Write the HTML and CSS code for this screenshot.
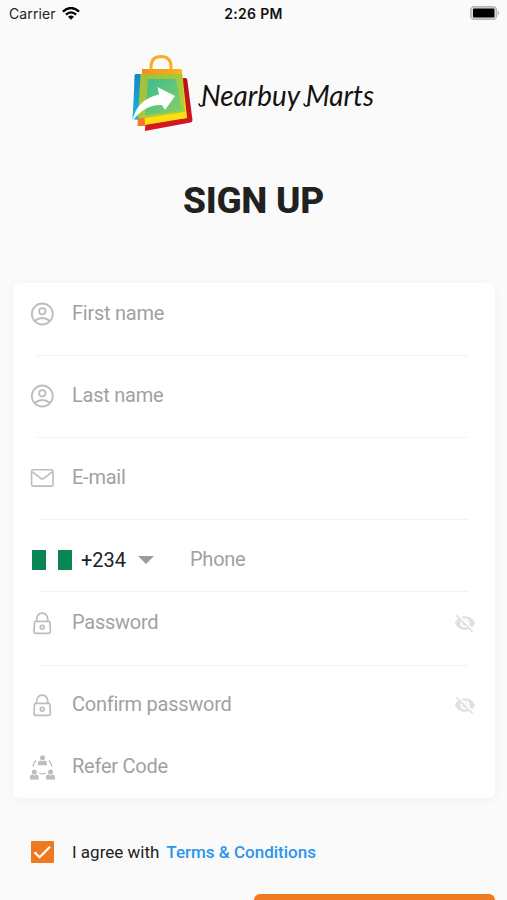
FILE: index.html
```
<!DOCTYPE html>
<html lang="en">
<head>
<meta charset="utf-8">
<title>Nearbuy Marts – Sign up</title>
<link rel="stylesheet" href="styles.css">
</head>
<body>
<svg width="0" height="0" class="defs">
  <symbol id="user" viewBox="0 0 24 24"><g fill="none" stroke="#bdbdbd" stroke-width="1.8"><circle cx="12.300" cy="12" r="10.5"/><circle cx="12.300" cy="9.3" r="3.2"/><path d="M4.500 19Q12.300 13 20.100 19"/></g></symbol>
  <symbol id="mail" viewBox="0 0 24 24"><g fill="none" stroke="#bdbdbd" stroke-width="1.6"><rect x="1.600" y="3.7" width="21.4" height="16.4" rx="1.6"/><path d="M2.400 5.900l8.600 6.600q1.300 1 2.600 0L22.200 5.900"/></g></symbol>
  <symbol id="lock" viewBox="0 0 24 24"><g fill="none" stroke="#bdbdbd" stroke-width="1.7"><path d="M5.600 10.300H18.800Q19.800 10.300 19.900 11.300L20.400 20.700Q20.400 22.300 18.800 22.300H5.600Q4 22.300 4 20.700L4.500 11.300Q4.600 10.300 5.600 10.300Z"/><path d="M6.500 10Q6.500 2.200 12.200 2.200T17.900 10"/><circle cx="12.200" cy="16.300" r="1.900"/></g></symbol>
  <symbol id="eye" viewBox="0 0 24 24"><path fill="#e0e0e0" d="M12 7c2.760 0 5 2.240 5 5 0 .650-.130 1.260-.360 1.830l2.920 2.920c1.510-1.260 2.700-2.890 3.430-4.750-1.730-4.390-6-7.500-11-7.500-1.400 0-2.740.250-3.980.700l2.160 2.160C10.740 7.130 11.350 7 12 7zM2 4.270l2.280 2.280.460.460C3.080 8.300 1.780 10.020 1 12c1.730 4.390 6 7.500 11 7.500 1.550 0 3.030-.300 4.380-.840l.420.420L19.730 22 21 20.730 3.270 3 2 4.270zM7.530 9.800l1.550 1.550c-.050.210-.080.430-.080.650 0 1.660 1.340 3 3 3 .220 0 .440-.030.650-.080l1.550 1.550c-.670.330-1.410.530-2.200.530-2.760 0-5-2.240-5-5 0-.790.200-1.530.530-2.200zm4.310-.780l3.150 3.150.020-.160c0-1.660-1.340-3-3-3l-.170.010z"/></symbol>
  <symbol id="person" viewBox="0 0 9 10.5"><circle cx="4.500" cy="2.700" r="2.500"/><path d="M0 10.500V8Q0 5.600 3 5.400L4.500 6.500 6 5.400Q9 5.600 9 8V10.500Z"/></symbol>
</svg>
<header class="status">
  <div class="carrier"><span>Carrier</span>
    <svg width="18" height="13" viewBox="0 0 18 13"><g fill="none" stroke="#000" stroke-width="2.300"><path d="M.900 4.600Q9-2.600 17.100 4.600"/><path d="M3.900 7.700Q9 3.100 14.100 7.700"/></g><path d="M6 9.800Q9 7.300 12 9.800L9 12.800Z"/></svg>
  </div>
  <div class="time">2:26 PM</div>
  <svg class="battery" width="30" height="14" viewBox="0 0 30 14"><rect x=".8" y=".8" width="25.800" height="12.400" rx="3.500" fill="#ddd" stroke="#b5b5b5" stroke-width="1.500"/><rect x="3" y="2.500" width="21.500" height="9" rx="1" fill="#000"/><path d="M28 4.800q2 2.200 0 4.400z" fill="#aaa"/></svg>
</header>
<main>
  <div class="logo">
    <svg width="280" height="80" viewBox="0 0 280 80">
      <defs>
        <linearGradient id="blue" x2="0" y2="1"><stop stop-color="#1687bd"/><stop offset="1" stop-color="#1bb5e8"/></linearGradient>
        <linearGradient id="gold" x2="1" y2="1"><stop stop-color="#f28a20"/><stop offset=".5" stop-color="#f9b81b"/><stop offset="1" stop-color="#fff100"/></linearGradient>
        <linearGradient id="lime" x2="1" y2="1"><stop stop-color="#a4bd38"/><stop offset="1" stop-color="#a8d63b"/></linearGradient>
        <linearGradient id="teal" x2="1" y2="1"><stop stop-color="#3cbc92"/><stop offset="1" stop-color="#88cf63"/></linearGradient>
        <linearGradient id="red" x2="0" y2="1"><stop stop-color="#b5121b"/><stop offset="1" stop-color="#d71920"/></linearGradient>
      </defs>
      <path fill="url(#blue)" d="M8 20H20V66L4.500 65.500Q6 40 6.500 22Q6.500 20 8 20Z"/>
      <path fill="url(#red)" d="M54 24H57.500Q59 24 59.300 26L64.500 66Q64.500 68 62.500 68.500L17 77 17.600 64 54 60Z"/>
      <path fill="#f37c2b" d="M10 61H20L17 72 9.500 72Z"/>
      <path fill="url(#gold)" d="M14 15H52Q54 15 54 17L59 64 17 69 13.500 40Z"/>
      <path fill="#ffdf12" d="M17 64L58 58 59 64 17 71Z"/>
      <path fill="url(#lime)" d="M12.500 20H54L57 58 16 64 10 64Z"/>
      <path fill="url(#teal)" d="M20 25H48L54 57 17 61Z"/>
      <path d="M23 16V13Q23 2.500 33 2.500T43 13V16" fill="none" stroke="#fbad22" stroke-width="3"/>
      <path fill="#fff" d="M4.500 67Q8 46 31 40.500L29.500 33 47 42 37 56 34 51Q17 50 4.500 67Z"/>
      <path d="M71 50Q72 53.500 76 51M176 50Q177 53.500 181 51" fill="none" stroke="#111" stroke-width="1.500" stroke-linecap="round"/>
      <text class="wordmark" x="73" y="51.500" textLength="173" lengthAdjust="spacingAndGlyphs">Nearbuy Marts</text>
    </svg>
  </div>
  <h1>SIGN UP</h1>
  <form class="card">
    <div class="row first"><svg class="icon"><use href="#user"/></svg><label>First name</label></div>
    <div class="row"><svg class="icon"><use href="#user"/></svg><label>Last name</label></div>
    <div class="row mail"><svg class="icon"><use href="#mail"/></svg><label>E-mail</label></div>
    <div class="row phone"><div class="flag"><i></i><i></i></div><span class="code">+234</span><i class="caret"></i><label>Phone</label></div>
    <div class="row password"><svg class="icon"><use href="#lock"/></svg><label>Password</label><svg class="eye"><use href="#eye"/></svg></div>
    <div class="row confirm"><svg class="icon"><use href="#lock"/></svg><label>Confirm password</label><svg class="eye"><use href="#eye"/></svg></div>
    <div class="row refer"><svg class="icon" viewBox="0 0 24 24"><g fill="#bdbdbd"><use href="#person" x="8" y="0" width="9" height="10.500"/><use href="#person" x="-.2" y="14.200" width="9" height="10.500"/><use href="#person" x="16" y="14.200" width="9" height="10.500"/></g><path d="M6 5.500Q3.500 8 3 11.500M18.800 5.500Q21.300 8 21.800 11.500M9.200 18.200Q12.300 19.700 15.500 18.200" fill="none" stroke="#bdbdbd" stroke-width="1.300"/></svg><label>Refer Code</label></div>
  </form>
  <div class="agree">
    <svg width="23" height="22" viewBox="0 0 23 22"><rect width="23" height="22" rx="1" fill="#ef7922"/><path d="M3.500 11.200L8.600 16.300 19 5.800" fill="none" stroke="#fff" stroke-width="2.200"/></svg>
    <span>I agree with</span><a>Terms &amp; Conditions</a>
  </div>
  <div class="submit"></div>
</main>
</body>
</html>
```
FILE: styles.css
```
* { box-sizing: border-box; }
body { margin: 0; height: 900px; overflow: hidden; background: #fafafa; font-family: Roboto, sans-serif; color: #212121; }
.defs { display: block; }
.status { display: grid; grid-template-columns: 1fr auto 1fr; align-items: center; height: 26px; padding: 0 7px 0 9px; font-family: "Inter", sans-serif; font-size: 14px; color: #222; }
.carrier { display: flex; align-items: center; gap: 6px; letter-spacing: .1px; }
.time { margin-right: 2px; font-weight: 600; color: #111; letter-spacing: .3px; }
.battery { justify-self: end; }
.logo { height: 80px; margin: 28px 0 0 128px; }
.logo svg { display: block; overflow: visible; }
.wordmark { font-family: "Brush Script MT", "Segoe Script", Lato, cursive; font-size: 29px; font-style: italic; fill: #111; }
h1 { margin: 45px 0 0; height: 44px; line-height: 44px; font-size: 37px; font-weight: 800; letter-spacing: -.3px; text-align: center; }
.card { margin: 60px 12px 0 13px; height: 515px; background: #fff; border-radius: 6px; box-shadow: 0 2px 10px rgba(0,0,0,.04); }
.row { display: flex; align-items: flex-start; height: 82px; padding: 28px 18px 0 17px; background: linear-gradient(#f3f3f3, #f3f3f3) no-repeat 23px 100% / 432px 1.500px; }
.row.first { height: 73px; padding-top: 19px; }
.row.mail { background-position-x: 26px; background-size: 429px 1.500px; }
.row.phone { height: 72px; padding: 27px 18px 0 19px; background-position-x: 26px; background-size: 429px 1.500px; }
.row.password { height: 74px; padding-top: 19px; background-position-x: 26px; background-size: 429px 1.500px; }
.row.confirm { height: 63px; padding-top: 27px; background: none; }
.row.refer { height: 68px; padding-top: 26px; background: none; }
.icon { width: 24px; height: 24px; margin-right: 18px; flex: none; overflow: visible; }
label { font-size: 20px; line-height: 22px; letter-spacing: -.25px; color: #a1a1a1; white-space: nowrap; }
.eye { width: 22px; height: 22px; margin: 1px 1px 0 auto; }
.flag { display: flex; justify-content: space-between; width: 40px; height: 20px; margin-top: 3px; }
.flag i { width: 14px; background: #078753; }
.code { width: 57px; margin-left: 9px; font-size: 20px; line-height: 26px; }
.caret { margin-top: 9px; border: 8px solid transparent; border-top-color: #9b9b9b; border-bottom: 0; }
.phone label { margin-left: 36px; line-height: 24px; }
.agree { display: flex; align-items: center; height: 24px; margin: 42px 0 0 31px; font-size: 17px; }
.agree span { margin-left: 18px; }
.agree a { margin-left: 7px; color: #2c96ee; font-weight: 500; }
.submit { height: 46px; margin: 30px 12px 0 254px; background: #ef7922; border-radius: 6px; }
```
